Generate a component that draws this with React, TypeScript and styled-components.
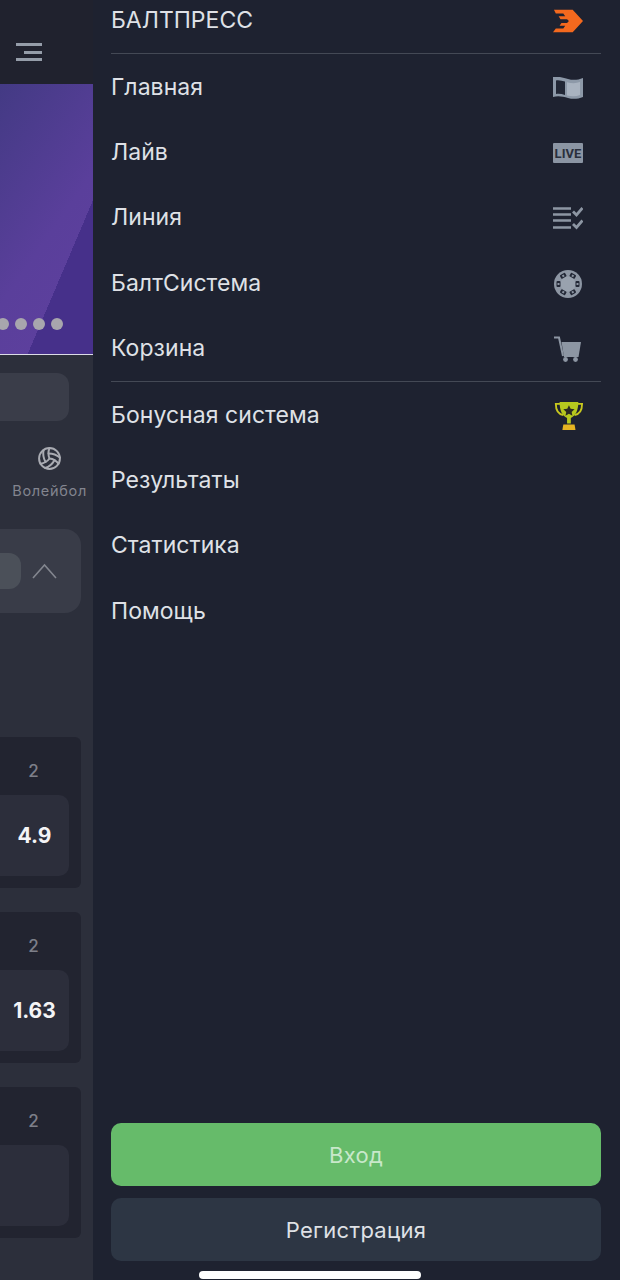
import React from 'react';
import styled, { createGlobalStyle } from 'styled-components';
import { Volleyball } from 'lucide-react';

const GlobalStyle = createGlobalStyle`
    html, body {
        margin: 0;
        padding: 0;
        background: #1e2230;
    }
    * {
        box-sizing: border-box;
    }
`;

// ---------- page ----------
const Page = styled.div`
    position: relative;
    display: flex;
    width: 620px;
    height: 1280px;
    overflow: hidden;
    font-family: Inter, "Noto Sans", sans-serif;
`;

const HomeIndicator = styled.div`
    position: absolute;
    left: 199px;
    bottom: 1px;
    width: 222px;
    height: 8px;
    border-radius: 4px;
    background: #fff;
`;

// ---------- left panel behind the drawer ----------
const BackPanel = styled.div`
    width: 93px;
    flex-shrink: 0;
    display: flex;
    flex-direction: column;
    align-items: flex-end;
    background: #2c2f3b;
    overflow: hidden;
`;

const TopBar = styled.div`
    width: 100%;
    height: 84px;
    flex-shrink: 0;
    padding: 43px 51px 0 0;
    display: flex;
    justify-content: flex-end;
    align-items: flex-start;
    background: #20222e;
`;

const Banner = styled.div`
    width: 100%;
    height: 271px;
    flex-shrink: 0;
    display: flex;
    justify-content: flex-end;
    align-items: flex-end;
    gap: 6px;
    padding: 0 30px 24px 0;
    border-bottom: 1px solid #dcdce6;
    background:
        linear-gradient(113deg, transparent 131px, #46308a 131px),
        linear-gradient(125deg, #433a84 0%, #5a3f9b 55%, #5f409f 100%);
`;

const Dot = styled.span`
    width: 12px;
    height: 12px;
    flex-shrink: 0;
    border-radius: 50%;
    background: #a8a6ad;
`;

const SearchBar = styled.div`
    width: 100%;
    height: 48px;
    flex-shrink: 0;
    margin: 18px 24px 0 0;
    border-radius: 0 12px 12px 0;
    background: #3a3d49;
`;

const SportTab = styled.div`
    width: 100%;
    flex-shrink: 0;
    margin-top: 25px;
    padding-right: 6px;
    display: flex;
    flex-direction: column;
    align-items: flex-end;
    gap: 11px;
    font-size: 14.5px;
    line-height: 17px;
    letter-spacing: 0.7px;
    white-space: nowrap;
    color: #83858f;
    svg {
        margin-right: 25px;
        color: #a9abb2;
    }
`;

const FilterCard = styled.div`
    width: 81px;
    height: 84px;
    flex-shrink: 0;
    margin: 30px 12px 0 0;
    padding-right: 24px;
    display: flex;
    justify-content: space-between;
    align-items: center;
    border-radius: 0 16px 16px 0;
    background: #393c48;
`;

const FilterPill = styled.div`
    width: 21px;
    height: 36px;
    border-radius: 0 12px 12px 0;
    background: #4b5059;
`;

const OddsCard = styled.div<{ $first?: boolean }>`
    width: 81px;
    height: 151px;
    flex-shrink: 0;
    margin: ${p => (p.$first ? '124px' : '24px')} 12px 0 0;
    padding: 12px 12px 12px 0;
    display: flex;
    flex-direction: column;
    align-items: flex-end;
    border-radius: 0 6px 6px 0;
    background: #222430;
`;

const OddsHead = styled.div`
    width: 100%;
    height: 46px;
    padding: 12px 2px 0 0;
    text-align: center;
    font-size: 17px;
    line-height: 20px;
    font-weight: 500;
    color: #7d7f89;
`;

const OddsButton = styled.div`
    width: 100%;
    height: 81px;
    display: flex;
    justify-content: center;
    align-items: center;
    border-radius: 0 10px 10px 0;
    background: #2c2e3b;
    font-size: 21px;
    font-weight: 700;
    color: #f4f4f6;
`;

// ---------- drawer ----------
const Drawer = styled.aside`
    flex: 1;
    display: flex;
    flex-direction: column;
    padding: 0 19px 19px 18px;
    background: #1e2230;
`;

const LogoRow = styled.div`
    height: 54px;
    flex-shrink: 0;
    padding-bottom: 13px;
    display: flex;
    justify-content: space-between;
    align-items: center;
    border-bottom: 1px solid #444955;
    font-size: 23px;
    color: #dfe1e6;
`;

const MenuGroup = styled.nav<{ $divided?: boolean }>`
    display: flex;
    flex-direction: column;
    border-bottom: ${p => (p.$divided ? '1px solid #444955' : 'none')};
`;

const MenuRow = styled.a`
    height: 65.4px;
    display: flex;
    justify-content: space-between;
    align-items: center;
    font-size: 23px;
    letter-spacing: 0.05px;
    color: #dfe1e6;
`;

const IconSlot = styled.span`
    width: 30px;
    margin: 2px 18px 0 0;
    display: flex;
    justify-content: center;
    align-items: center;
`;

const LiveBadge = styled.span`
    width: 30px;
    height: 20px;
    display: flex;
    justify-content: center;
    align-items: center;
    border-radius: 1px;
    background: #8b95a3;
    font-family: Roboto, sans-serif;
    font-size: 13px;
    font-weight: 700;
    color: #2a2f3c;
`;

const Actions = styled.div`
    margin-top: auto;
    display: flex;
    flex-direction: column;
    gap: 12px;
`;

const ActionButton = styled.button<{ $primary?: boolean }>`
    height: 63px;
    border: none;
    border-radius: 10px;
    font-family: inherit;
    font-size: 22px;
    letter-spacing: 0.3px;
    color: ${p => (p.$primary ? '#c8e8ca' : '#dfe1e6')};
    background: ${p => (p.$primary ? '#66bb6a' : '#2d3644')};
`;

// ---------- icons ----------
const BurgerIcon = () => (
    <svg width="26" height="18" viewBox="0 0 26 18" fill="#959da9">
        <rect x="0" y="0" width="26" height="3" />
        <rect x="8" y="8" width="18" height="3" />
        <rect x="0" y="15" width="26" height="3" />
    </svg>
);

const ChevronUp = () => (
    <svg width="25" height="16" viewBox="0 0 25 16" fill="none" stroke="#83868f" strokeWidth="1.6">
        <polyline points="1,15 12.500,2 24,15" />
    </svg>
);

const LogoIcon = () => (
    <svg width="32" height="24" viewBox="0 0 32 24" fill="#f4691e">
        <path d="M1 0H21L32 12L21 24H0L3 20H11L13 17H7L9 14H15L17 12L15 10H8L6 7H13L11 4H3Z" />
    </svg>
);

const MapIcon = () => (
    <svg width="30" height="22" viewBox="0 0 30 22">
        <path d="M0 0C6-1 11 1 15 2C20 3.500 25 3 30 1V20C25 22 20 22.500 15 21C10 19.500 5 18.500 0 20Z" fill="#8d99a8" />
        <path d="M3 3.500C6 3 9 3.800 12 4.600V18C9 17 6 16.500 3 17Z" fill="#222735" />
        <path d="M14 5.200C19 6.500 23 6.500 27 5V18C23 19.500 19 19.500 14 18.500Z" fill="#a9b3c0" />
    </svg>
);

const ListCheckIcon = () => (
    <svg width="30" height="23" viewBox="0 0 30 23" fill="none" stroke="#8d96a3">
        <path d="M0 1.500H18M0 7.500H18M0 13.500H18M0 20.500H18" strokeWidth="2.600" />
        <path d="M20 4.500L23.500 8L29.500 1M20 17L23.500 20.500L29.500 13.500" strokeWidth="2.800" />
    </svg>
);

const ChipIcon = () => (
    <svg width="28" height="28" viewBox="0 0 28 28">
        <circle cx="14" cy="14" r="14" fill="#8d96a3" />
        <circle cx="14" cy="14" r="7.500" fill="#99a2ae" />
        <g fill="#222735">
            {[30, 90, 150, 210, 270, 330].map(deg => (
                <rect key={deg} x="11" y="2.500" width="6" height="4" rx="1" transform={`rotate(${deg} 14 14)`} />
            ))}
        </g>
        <g fill="#8d96a3">
            {[30, 90, 150, 210, 270, 330].map(deg => (
                <rect key={deg} x="13" y="3.500" width="2" height="2" transform={`rotate(${deg} 14 14)`} />
            ))}
        </g>
    </svg>
);

const CartIcon = () => (
    <svg width="28" height="26" viewBox="0 0 28 26">
        <path d="M0 1.500H5L9 20" fill="none" stroke="#8d96a3" strokeWidth="2" />
        <path d="M7.500 6H27L24.500 21H10Z" fill="#8d96a3" />
        <circle cx="11.500" cy="23.500" r="2.400" fill="#8d96a3" />
        <circle cx="21.500" cy="23.500" r="2.400" fill="#8d96a3" />
    </svg>
);

const TrophyIcon = () => (
    <svg width="32" height="30" viewBox="-2 0 32 30">
        <path d="M6 2H1C1 9 3 13 9 14M24 2H29C29 9 27 13 21 14" fill="none" stroke="#c8c81e" strokeWidth="2" />
        <path d="M5 0H25C25 9 22 15 17 17V23H13V17C8 15 5 9 5 0Z" fill="#b5c81e" />
        <path d="M15 3.500L16.800 7.300L21 7.800L17.900 10.600L18.700 14.700L15 12.700L11.300 14.700L12.100 10.600L9 7.800L13.200 7.300Z" fill="#2a2a22" />
        <path d="M9 24H21L22 30H8Z" fill="#e6b422" />
    </svg>
);

// ---------- data ----------
const mainMenu: { label: string; icon: React.ReactNode }[] = [
    { label: 'Главная', icon: <MapIcon /> },
    { label: 'Лайв', icon: <LiveBadge>LIVE</LiveBadge> },
    { label: 'Линия', icon: <ListCheckIcon /> },
    { label: 'БалтСистема', icon: <ChipIcon /> },
    { label: 'Корзина', icon: <CartIcon /> },
];

const extraMenu: { label: string; icon?: React.ReactNode }[] = [
    { label: 'Бонусная система', icon: <TrophyIcon /> },
    { label: 'Результаты' },
    { label: 'Статистика' },
    { label: 'Помощь' },
];

const odds = ['4.9', '1.63', ''];

export default function App() {
    return (
        <Page>
            <GlobalStyle />
            <BackPanel>
                <TopBar>
                    <BurgerIcon />
                </TopBar>
                <Banner>
                    <Dot />
                    <Dot />
                    <Dot />
                    <Dot />
                </Banner>
                <SearchBar />
                <SportTab>
                    <Volleyball size={25} strokeWidth={1.9} />
                    <span>Волейбол</span>
                </SportTab>
                <FilterCard>
                    <FilterPill />
                    <ChevronUp />
                </FilterCard>
                {odds.map((value, i) => (
                    <OddsCard key={i} $first={i === 0}>
                        <OddsHead>2</OddsHead>
                        <OddsButton>{value}</OddsButton>
                    </OddsCard>
                ))}
            </BackPanel>

            <Drawer>
                <LogoRow>
                    <span>БАЛТПРЕСС</span>
                    <IconSlot>
                        <LogoIcon />
                    </IconSlot>
                </LogoRow>
                <MenuGroup $divided>
                    {mainMenu.map(item => (
                        <MenuRow key={item.label}>
                            {item.label}
                            <IconSlot>{item.icon}</IconSlot>
                        </MenuRow>
                    ))}
                </MenuGroup>
                <MenuGroup>
                    {extraMenu.map(item => (
                        <MenuRow key={item.label}>
                            {item.label}
                            {item.icon && <IconSlot>{item.icon}</IconSlot>}
                        </MenuRow>
                    ))}
                </MenuGroup>
                <Actions>
                    <ActionButton $primary>Вход</ActionButton>
                    <ActionButton>Регистрация</ActionButton>
                </Actions>
            </Drawer>

            <HomeIndicator />
        </Page>
    );
}
